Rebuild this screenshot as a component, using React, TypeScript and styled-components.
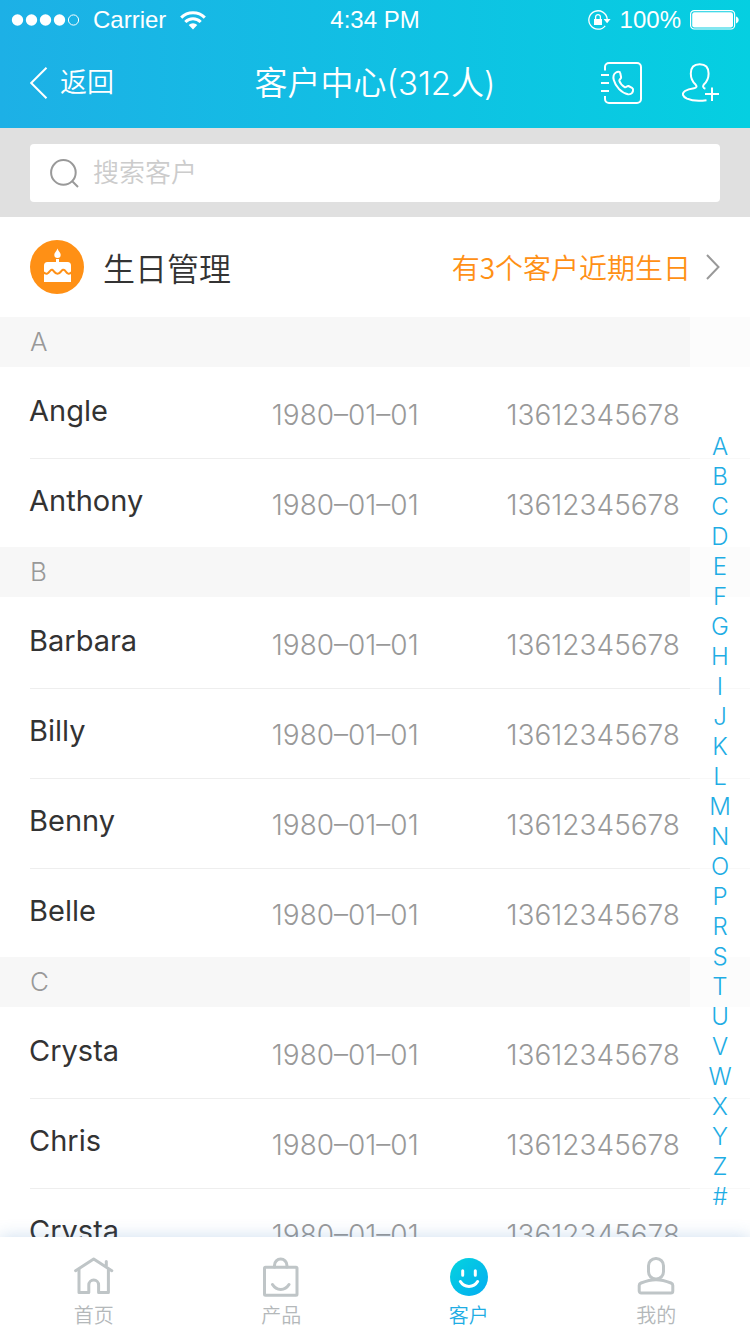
import React from 'react';
import styled, { createGlobalStyle, css } from 'styled-components';

const GlobalStyle = createGlobalStyle`
  * { box-sizing: border-box; }
  body {
    margin: 0;
    background: #fff;
    color: #333;
    font-family: Inter, 'Noto Sans CJK SC', sans-serif;
    font-weight: 350;
  }
  button, input { font: inherit; color: inherit; }
  svg { display: block; flex: none; }
`;

const Screen = styled.div`
  display: flex;
  flex-direction: column;
  height: 100vh;
`;

const TopBar = styled.header`
  flex: none;
  color: #fff;
  background: linear-gradient(90deg, #1db0e6, #05cfe1);
`;

const threeColumns = css`
  display: grid;
  grid-template-columns: 1fr auto 1fr;
  align-items: center;
`;

const StatusBar = styled.div`
  ${threeColumns}
  height: 38px;
  padding: 0 11px;
  font-family: 'Liberation Sans', Arial, sans-serif;
  font-size: 24px;
  font-weight: 400;
  line-height: 40px;
`;

const StatusGroup = styled.div<{ $end?: boolean }>`
  display: flex;
  align-items: center;
  gap: ${p => (p.$end ? 9 : 14)}px;
  justify-content: ${p => (p.$end ? 'flex-end' : 'flex-start')};
`;

const NavBar = styled.div`
  ${threeColumns}
  height: 90px;
  padding: 0 30px;
`;

const Title = styled.h1`
  margin: 0;
  font-size: 33px;
  font-weight: 350;
  line-height: 48px;
`;

const BackLink = styled.a`
  display: flex;
  align-items: center;
  gap: 12px;
  color: inherit;
  font-size: 27px;
  line-height: 40px;
  text-decoration: none;
`;

const NavActions = styled.div`
  display: flex;
  align-items: center;
  justify-content: flex-end;
  gap: 40px;
`;

const IconButton = styled.button`
  padding: 0;
  border: 0;
  background: none;
  cursor: pointer;
`;

const SearchStrip = styled.form`
  flex: none;
  padding: 16px 30px 15px;
  background: #e0e0e0;
`;

const SearchField = styled.label`
  display: flex;
  align-items: center;
  gap: 14px;
  height: 58px;
  padding: 0 20px;
  border-radius: 4px;
  background: #fff;
`;

const SearchInput = styled.input`
  flex: 1;
  min-width: 0;
  padding: 0;
  border: 0;
  outline: 0;
  background: none;
  font-size: 26px;
  line-height: 40px;
  &::placeholder { color: #ccc; opacity: 1; }
`;

const BirthdayLink = styled.a`
  display: flex;
  flex: none;
  align-items: center;
  height: 100px;
  padding: 0 30px;
  color: #333;
  font-family: 'Noto Sans CJK SC', sans-serif;
  text-decoration: none;
`;

const BirthdayTitle = styled.span`
  flex: 1;
  margin-left: 19px;
  font-size: 32px;
  line-height: 48px;
`;

const BirthdayNote = styled.span`
  margin-right: 15px;
  color: #ff9015;
  font-size: 28px;
  line-height: 40px;
`;

const Directory = styled.main`
  position: relative;
  flex: 1;
  min-height: 0;
`;

const Scroller = styled.div`
  height: 100%;
  overflow-y: auto;
  scrollbar-width: none;
`;

const GroupHeading = styled.h2`
  margin: 0;
  padding: 0 30px;
  background: #f7f7f7;
  color: #999;
  font-size: 26px;
  font-weight: 300;
  line-height: 50px;
`;

const ContactList = styled.ul`
  margin: 0;
  padding: 2px 0 0;
  list-style: none;
`;

const ContactRow = styled.li`
  display: grid;
  grid-template-columns: 242fr 234fr auto;
  align-items: start;
  height: 90px;
  padding: 22px 70px 0 29px;
  background: linear-gradient(#eee, #eee) 30px 100% / 100% 1px no-repeat;
  &:last-child {
    height: 88px;
    background: none;
  }
`;

const ContactName = styled.span`
  font-size: 29px;
  font-weight: 400;
  line-height: 40px;
`;

const ContactMeta = styled.span`
  color: #999;
  font-size: 28px;
  font-weight: 300;
  line-height: 48px;
`;

const LetterIndex = styled.nav`
  position: absolute;
  inset: 0 0 0 auto;
  display: flex;
  flex-direction: column;
  justify-content: flex-end;
  width: 60px;
  padding-bottom: 25px;
  background: rgba(255, 255, 255, 0.6);
`;

const LetterLink = styled.a`
  color: #1fade4;
  font-size: 24px;
  font-weight: 300;
  line-height: 30px;
  text-align: center;
  text-decoration: none;
`;

const TabBar = styled.nav`
  position: relative;
  display: grid;
  flex: none;
  grid-template-columns: repeat(4, 1fr);
  height: 100px;
  background: #fff;
  box-shadow: 0 0 16px rgba(50, 120, 190, 0.25);
`;

const Tab = styled.a<{ $active?: boolean }>`
  display: flex;
  flex-direction: column;
  align-items: center;
  gap: 5px;
  padding-top: 20px;
  color: ${p => (p.$active ? '#1fade4' : '#b4b8ba')};
  font-size: 20px;
  line-height: 28px;
  text-decoration: none;
`;

const SignalDots = () => (
  <svg width="68" height="12" viewBox="0 0 68 12" fill="#fff" aria-hidden="true">
    {[6.5, 20.5, 34.5, 48.5].map(x => (
      <circle key={x} cx={x} cy="6" r="5.7" />
    ))}
    <circle cx="62.5" cy="6" r="5.1" fill="none" stroke="#fff" />
  </svg>
);

const WifiIcon = () => (
  <svg width="26" height="19" viewBox="0 0 26 19" fill="none" stroke="#fff" strokeWidth="3" aria-hidden="true">
    <path d="M1.2 6.6a16.6 16.6 0 0 1 23.6 0" />
    <path d="M5.3 11a10.8 10.8 0 0 1 15.4 0" />
    <path d="M13 18.5l-4.3-4.4a6 6 0 0 1 8.6 0z" fill="#fff" stroke="none" />
  </svg>
);

const RotationLockIcon = () => (
  <svg width="23" height="20" viewBox="0 0 23 20" fill="none" stroke="#fff" strokeWidth="1.3" aria-hidden="true">
    <path d="M17.2 15.8A9.2 9.2 0 1 1 19.2 9" />
    <path d="M15.6 9h7l-3.5 4.2z" fill="#fff" stroke="none" />
    <rect x="6" y="9" width="8" height="6" fill="#fff" stroke="none" />
    <path d="M7.6 9V7a2.4 2.4 0 0 1 4.8 0v2" />
  </svg>
);

const BatteryIcon = () => (
  <svg width="49" height="20" viewBox="0 0 49 20" aria-hidden="true">
    <rect x="0.6" y="0.6" width="44" height="18.4" rx="3.6" fill="none" stroke="#fff" strokeWidth="1.2" />
    <rect x="2.2" y="2.2" width="40.8" height="15.2" rx="2.2" fill="#fff" />
    <path d="M46 6.6c3.6 1.2 3.6 5.6 0 6.8z" fill="#fff" />
  </svg>
);

const BackArrow = () => (
  <svg width="18" height="32" viewBox="0 0 18 32" fill="none" stroke="#fff" strokeWidth="2" aria-hidden="true">
    <path d="M16.5 0.8L1.2 16l15.3 15.2" />
  </svg>
);

const PhoneBookIcon = () => (
  <svg width="41" height="42" viewBox="0 0 41 42" fill="none" stroke="#fff" strokeWidth="2" aria-hidden="true">
    <path d="M4 8.5V5a4 4 0 0 1 4-4h28a4 4 0 0 1 4 4v32a4 4 0 0 1-4 4H8a4 4 0 0 1-4-4v-3" />
    <path d="M0 13h8M0 21h8M0 29h8" />
    <path
      strokeLinejoin="round"
      d="M15 10.5C12.5 12 12 15 12.8 18C14.5 24.5 20.5 31 27 32.3C29 32.6 31.5 31.5 32 29C32.4 27.5 32 26.5 31 25.8L27.5 24C26.3 23.5 25.5 25.5 24 25.3C21.5 24 19 21 18.3 18.8C18 17.5 20.3 16.5 20.1 15.3L19.2 11C19 9.5 16.5 9.6 15 10.5Z"
    />
  </svg>
);

const AddPersonIcon = () => (
  <svg width="38" height="40" viewBox="0 0 38 40" fill="none" stroke="#fff" strokeWidth="2" aria-hidden="true">
    <path d="M24.5 37.2C17 38.2 9.5 37.6 5 35.6C0 33.2 -0.2 30.3 3 28C6 26 9 25.6 12 25.2C14.6 24.8 15.2 23.4 13.6 21.6C10.2 18.5 8.8 15 8.8 10.5C8.8 4.2 12 1.2 17.7 1.2C23.4 1.2 26.6 4.2 26.6 10.5C26.6 15 25.2 18.5 21.8 21.6C20.6 23.2 21 25 23.4 25.8" />
    <path d="M30 24.5v13.5M23 31h14" />
  </svg>
);

const SearchIcon = () => (
  <svg width="29" height="29" viewBox="0 0 29 29" fill="none" stroke="#999" strokeWidth="2" aria-hidden="true">
    <circle cx="13.4" cy="13.4" r="12.3" />
    <path d="M22 22l6 6" />
  </svg>
);

const CakeIcon = () => (
  <svg width="54" height="54" viewBox="0 0 54 54" aria-hidden="true">
    <circle cx="27" cy="27" r="27" fill="#ff9015" />
    <path d="M27.5 8.6c1 3 3.2 4 3.2 6.2a3.2 3.2 0 0 1-6.4 0c0-2.2 2.2-3.2 3.2-6.2z" fill="#fff" />
    <path d="M26 19h3v3h8.5a3.5 3.5 0 0 1 3.5 3.5V42H14V25.5a3.5 3.5 0 0 1 3.5-3.5H26z" fill="#fff" />
    <path
      d="M13 32C17 35.5 18.5 33 20.5 30.5C21.7 29.2 22.7 29.6 24 31.5C26.5 34.6 28.5 34.6 31 31.5C32.3 29.6 33.5 29.2 35 30.5C37 33 38.5 35.5 42 32"
      fill="none"
      stroke="#ff9015"
      strokeWidth="2"
    />
  </svg>
);

const ForwardArrow = () => (
  <svg width="14" height="26" viewBox="0 0 14 26" fill="none" stroke="#999" strokeWidth="2" aria-hidden="true">
    <path d="M1 1l11.5 12L1 25" />
  </svg>
);

const TabIcon = ({ children }: { children: React.ReactNode }) => (
  <svg
    width="40"
    height="40"
    viewBox="0 0 40 40"
    fill="none"
    stroke="#bfc5c7"
    strokeWidth="3"
    strokeLinecap="round"
    strokeLinejoin="round"
    aria-hidden="true"
  >
    {children}
  </svg>
);

const HomeIcon = () => (
  <TabIcon>
    <path d="M1.6 13.7L19.7 2l18.1 11.7M32.3 4.5V9" />
    <path d="M5 12.5V35.5H14.8V28a4.9 4.9 0 0 1 9.8 0v7.5H34.4V12.5" />
  </TabIcon>
);

const BagIcon = () => (
  <TabIcon>
    <rect x="3.5" y="10.3" width="32.5" height="28" rx="1" />
    <path d="M13.5 10V8.3a6.2 6.2 0 0 1 12.4 0V10M11.5 27.5c4 6.5 12.5 6.5 16.5 0" />
  </TabIcon>
);

const SmileIcon = () => (
  <TabIcon>
    <defs>
      <linearGradient id="smile" x1="0" y1="0" x2="1" y2="1">
        <stop offset="0.1" stopColor="#04d0e0" />
        <stop offset="0.9" stopColor="#04b0f0" />
      </linearGradient>
    </defs>
    <circle cx="20" cy="20" r="19" fill="url(#smile)" stroke="none" />
    <path d="M13.7 13.8v4.4M26.3 13.8v4.4M11.4 24.6c3.8 6.4 13.4 6.4 17.2 0" stroke="#fff" />
  </TabIcon>
);

const PersonIcon = () => (
  <TabIcon>
    <rect x="12.5" y="1.5" width="15" height="20.5" rx="7.2" />
    <path d="M3.2 34V28.5C3.2 27 3.8 26.5 5 26C10 24 15 22.7 20 22.7S30 24 35 26C36.2 26.5 36.8 27 36.8 28.5V34A2 2 0 0 1 34.8 36H5.2A2 2 0 0 1 3.2 34Z" />
  </TabIcon>
);

const groups = [
  { letter: 'A', names: ['Angle', 'Anthony'] },
  { letter: 'B', names: ['Barbara', 'Billy', 'Benny', 'Belle'] },
  { letter: 'C', names: ['Crysta', 'Chris', 'Crysta'] },
];

const indexLetters = 'ABCDEFGHIJKLMNOPRSTUVWXYZ#'.split('');

const tabs = [
  { label: '首页', Icon: HomeIcon },
  { label: '产品', Icon: BagIcon },
  { label: '客户', Icon: SmileIcon, active: true },
  { label: '我的', Icon: PersonIcon },
];

export default function App() {
  return (
    <Screen>
      <GlobalStyle />
      <TopBar>
        <StatusBar>
          <StatusGroup>
            <SignalDots />
            <span>Carrier</span>
            <WifiIcon />
          </StatusGroup>
          <span>4:34 PM</span>
          <StatusGroup $end>
            <RotationLockIcon />
            <span>100%</span>
            <BatteryIcon />
          </StatusGroup>
        </StatusBar>
        <NavBar>
          <BackLink href="#back">
            <BackArrow />
            返回
          </BackLink>
          <Title>客户中心(312人)</Title>
          <NavActions>
            <IconButton type="button" aria-label="通讯录">
              <PhoneBookIcon />
            </IconButton>
            <IconButton type="button" aria-label="添加客户">
              <AddPersonIcon />
            </IconButton>
          </NavActions>
        </NavBar>
      </TopBar>

      <SearchStrip role="search">
        <SearchField>
          <SearchIcon />
          <SearchInput type="text" placeholder="搜索客户" aria-label="搜索客户" />
        </SearchField>
      </SearchStrip>

      <BirthdayLink href="#birthdays">
        <CakeIcon />
        <BirthdayTitle>生日管理</BirthdayTitle>
        <BirthdayNote>有3个客户近期生日</BirthdayNote>
        <ForwardArrow />
      </BirthdayLink>

      <Directory>
        <Scroller>
          {groups.map(group => (
            <section key={group.letter} id={group.letter}>
              <GroupHeading>{group.letter}</GroupHeading>
              <ContactList>
                {group.names.map((name, i) => (
                  <ContactRow key={i}>
                    <ContactName>{name}</ContactName>
                    <ContactMeta>1980–01–01</ContactMeta>
                    <ContactMeta>13612345678</ContactMeta>
                  </ContactRow>
                ))}
              </ContactList>
            </section>
          ))}
        </Scroller>
        <LetterIndex aria-label="字母索引">
          {indexLetters.map(letter => (
            <LetterLink key={letter} href={`#${letter}`}>
              {letter}
            </LetterLink>
          ))}
        </LetterIndex>
      </Directory>

      <TabBar>
        {tabs.map(({ label, Icon, active }) => (
          <Tab key={label} href={`#${label}`} $active={active}>
            <Icon />
            {label}
          </Tab>
        ))}
      </TabBar>
    </Screen>
  );
}
